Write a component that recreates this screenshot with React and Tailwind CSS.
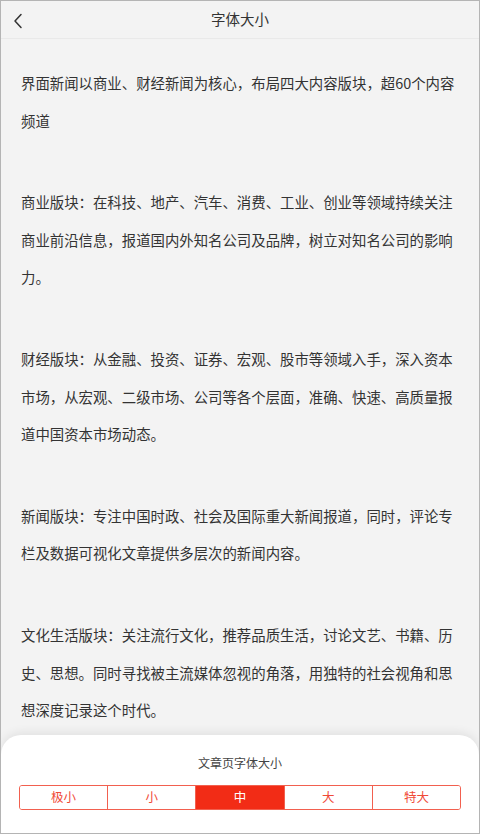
import React, { useState } from 'react'

const paragraphs = [
  '界面新闻以商业、财经新闻为核心，布局四大内容版块，超60个内容频道',
  '商业版块：在科技、地产、汽车、消费、工业、创业等领域持续关注商业前沿信息，报道国内外知名公司及品牌，树立对知名公司的影响力。',
  '财经版块：从金融、投资、证券、宏观、股市等领域入手，深入资本市场，从宏观、二级市场、公司等各个层面，准确、快速、高质量报道中国资本市场动态。',
  '新闻版块：专注中国时政、社会及国际重大新闻报道，同时，评论专栏及数据可视化文章提供多层次的新闻内容。',
  '文化生活版块：关注流行文化，推荐品质生活，讨论文艺、书籍、历史、思想。同时寻找被主流媒体忽视的角落，用独特的社会视角和思想深度记录这个时代。',
]

const sizes = ['极小', '小', '中', '大', '特大']

const App = () => {
  const [active, setActive] = useState(2)

  return (
    <div
      className="relative h-[834px] w-[480px] overflow-hidden border border-[#b4b4b4] bg-[#f3f3f3] text-[#333]"
      style={{ fontFamily: '"Noto Sans CJK SC", "Noto Sans", sans-serif' }}
    >
      {/* header */}
      <div className="relative flex h-[38px] items-center justify-center border-b border-[#e9e9e9]">
        <button className="absolute left-[10px] top-[10px] p-[2px]">
          <svg width="10" height="16" viewBox="0 0 10 16" fill="none">
            <polyline points="8,1.5 2,8 8,14.5" stroke="#333" strokeWidth="1.5" strokeLinejoin="round" strokeLinecap="round" />
          </svg>
        </button>
        <h1 className="text-[14.5px] leading-none text-[#333]">字体大小</h1>
      </div>

      {/* article text */}
      <div className="px-[20px] pt-[25px]">
        {paragraphs.map((p, i) => (
          <p key={i} className="mb-[44px] text-[14.4px] leading-[37.6px] text-[#333]">
            {p}
          </p>
        ))}
      </div>

      {/* bottom sheet */}
      <div className="absolute bottom-0 left-0 right-0 h-[98px] rounded-t-[20px] bg-white shadow-[0_-3px_10px_rgba(0,0,0,0.07)]">
        <p className="pt-[20px] text-center text-[12px] leading-[16px] text-[#444]">文章页字体大小</p>
        <div className="mx-[18px] mt-[14px] flex h-[25px] overflow-hidden rounded-[3px] border border-[#f2604f]">
          {sizes.map((s, i) => (
            <button
              key={s}
              onClick={() => setActive(i)}
              className={`flex flex-1 items-center justify-center text-[12.5px] leading-none ${
                i > 0 ? 'border-l border-[#f2604f]' : ''
              } ${i === active ? 'bg-[#f22c16] text-white' : 'bg-white text-[#f04a37]'}`}
            >
              {s}
            </button>
          ))}
        </div>
      </div>
    </div>
  )
}

export default App
